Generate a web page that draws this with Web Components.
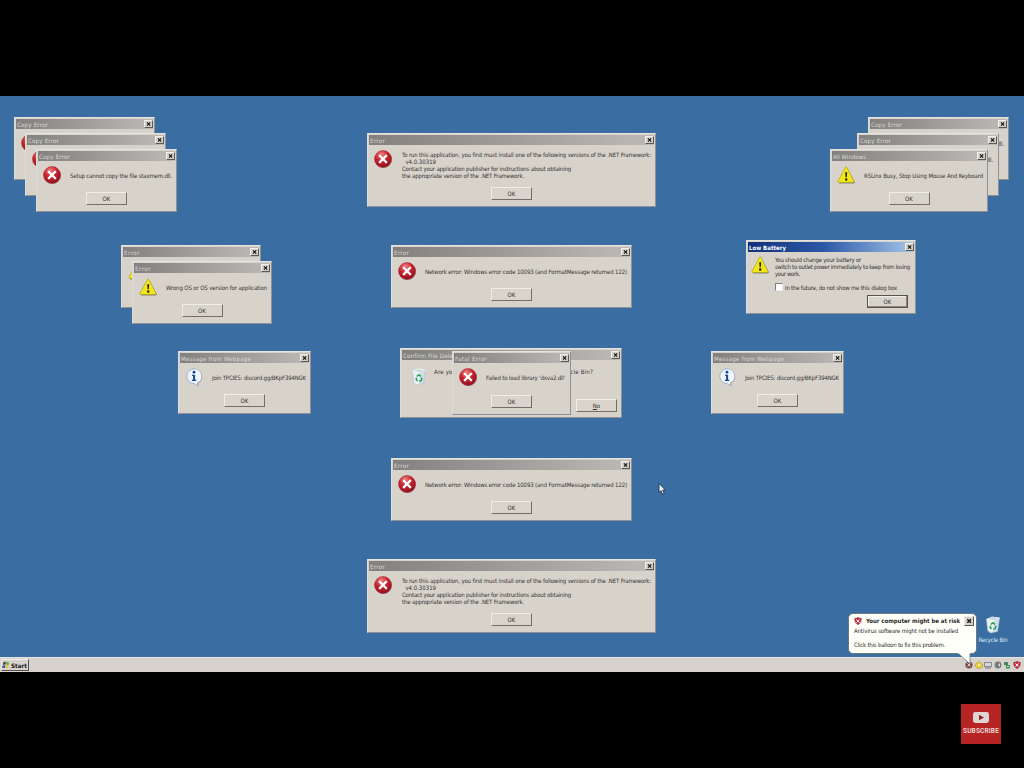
<!DOCTYPE html>
<html lang="en">
<head>
<meta charset="utf-8">
<title>Desktop</title>
<style>
  html, body { margin: 0; height: 100%; background: #000; overflow: hidden; }
  body { font-family: "DejaVu Sans Condensed", "DejaVu Sans", "Noto Sans", sans-serif; font-size: 6px; color: #33312f; }
</style>
</head>
<body>
<app-screen></app-screen>

<script>
// One line of text, spaced out to a given width in px
class FitLine extends HTMLElement {
  constructor () {
    super()
    this.attachShadow({ mode: 'open' })
    this.shadowRoot.innerHTML = `
      <style>
        :host { display: block; line-height: inherit; }
        span { display: block; width: max-content; white-space: pre; }
      </style>
      <span><slot></slot></span>
    `
  }

  connectedCallback () {
    const span = this.shadowRoot.querySelector('span')
    const width = Number(this.getAttribute('width'))
    const count = this.textContent.length
    if (!width || !count) return
    const natural = span.getBoundingClientRect().width
    span.style.letterSpacing = `${(width - natural) / count}px`
  }
}

const ICONS = {
  error: `
    <defs><radialGradient id="r" cx=".4" cy=".25" r=".8">
      <stop offset="0" stop-color="#ee8584"/><stop offset=".45" stop-color="#c92530"/><stop offset="1" stop-color="#8b0c19"/>
    </radialGradient></defs>
    <circle cx="9.6" cy="9.8" r="8.3" fill="#5b4c4a" opacity=".45"/>
    <circle cx="9" cy="9" r="8.5" fill="url(#r)" stroke="#9c2530" stroke-width=".5"/>
    <path d="M6 6l6 6M12 6l-6 6" stroke="#fff" stroke-width="2.3" stroke-linecap="square"/>`,
  warning: `
    <path d="M9.8 2L18 16.5L16.8 17.6H2z" fill="#55504a" opacity=".6"/>
    <path d="M8.6 1.2Q9.3.4 10 1.5L17 15.4Q17.2 16.5 16 16.5H1.6Q.5 16.3 1 15.2z" fill="#f3e51c" stroke="#a39b16" stroke-width=".6"/>
    <path d="M8.2 6.2h2l-.4 5.1H8.6z" fill="#24220c"/><circle cx="9.2" cy="13.5" r="1.2" fill="#24220c"/>`,
  info: `
    <path d="M9.8 1.8a7.7 7.2 0 0 1 3.4 13.4l.3 3-4-2.2A7.3 7.3 0 0 1 9.8 1.8z" fill="#6d7580" opacity=".7"/>
    <path d="M9 .8a8 7.5 0 0 1 3.3 14.2v2.6L9 15.7A8 7.5 0 0 1 9 .8z" fill="#f0f5fa" stroke="#93aac4" stroke-width=".7"/>
    <path d="M9 .8a8 7.5 0 0 0 0 14.9z" fill="#f0f5fa" stroke="#93aac4" stroke-width=".7"/>
    <path d="M8.4 1.4h1.4v13.7H8.4z" fill="#f0f5fa"/>
    <path d="M7.1 6.7h3v5h1.1v1.2H6.9v-1.2h1.2V7.9h-1z" fill="#17469c"/><circle cx="9" cy="4.2" r="1.4" fill="#17469c"/>`,
  bin: `
    <path d="M2.5 3.4L15.5 2l-2 13.4-7 1.6-2.8-2.4z" fill="#e7f1f2" stroke="#a9bcc2" stroke-width=".6"/>
    <path d="M2.5 3.4L8 1l7.5 1-5.3 2.5z" fill="#c2d6da" stroke="#fff" stroke-width=".7"/>
    <path d="M10.2 4.5L9 16.3l4.5-.9 2-13.4z" fill="#bdd1d9" opacity=".6"/>
    <path d="M6.8 8.5l2-1.8 2.2 1.6M11.8 9.7l-.5 3-2.2.4M7.5 13l-1.4-1.8.6-1.5" fill="none" stroke="#27a05b" stroke-width="1.5"/>`,
  shield: `
    <path d="M1.5 3Q6 3 9 .8Q12 3 16.5 3Q17.4 13 9 17.5Q.6 13 1.5 3z" fill="#c93144" stroke="#75303a"/>
    <path d="M5.6 5.7l6.8 6.8M12.4 5.7l-6.8 6.8" stroke="#fff" stroke-width="2.2"/>`
}

class UiIcon extends HTMLElement {
  constructor () {
    super()
    this.attachShadow({ mode: 'open' })
  }

  connectedCallback () {
    this.shadowRoot.innerHTML = `
      <style>
        :host { display: block; width: 18px; height: 18px; flex: none; }
        svg { display: block; width: 100%; height: 100%; overflow: visible; }
      </style>
      <svg viewBox="0 0 18 18">${ICONS[this.getAttribute('name')]}</svg>
    `
  }
}

class UiButton extends HTMLElement {
  constructor () {
    super()
    this.attachShadow({ mode: 'open' })
    this.shadowRoot.innerHTML = `
      <style>
        :host {
          display: flex; align-items: center; justify-content: center; box-sizing: border-box;
          width: 41px; height: 13px; flex: none; background: #d8d4cc; line-height: 8px;
          border: 1px solid; border-color: #efede8 #716e69 #716e69 #efede8;
        }
        :host([focused]) { outline: 1px solid #56544f; outline-offset: -1px; border-color: #65625d; box-shadow: inset -1px -1px #8b8882, inset 1px 1px #f1efea; }
      </style>
      <slot></slot>
    `
  }
}

class CloseButton extends HTMLElement {
  constructor () {
    super()
    this.attachShadow({ mode: 'open' })
    this.shadowRoot.innerHTML = `
      <style>
        :host {
          display: block; box-sizing: border-box; width: 9px; height: 8px; flex: none;
          background: #d5d1c9; border: 1px solid; border-color: #efeee9 #5a5854 #5a5854 #efeee9;
        }
        svg { display: block; width: 100%; height: 100%; }
      </style>
      <svg viewBox="0 0 7 6"><path d="M2 1.4l3.2 3.2M5.2 1.4L2 4.6" stroke="#1b1b1b" stroke-width="1.3"/></svg>
    `
  }
}

class DialogWindow extends HTMLElement {
  constructor () {
    super()
    this.attachShadow({ mode: 'open' })
  }

  static Styles = `
    :host {
      position: absolute; box-sizing: border-box; display: flex; flex-direction: column;
      background: #d7d3cb; padding: 1px 1px 2px;
      border: 1px solid; border-color: #e4e3de #8e9298 #8e9298 #dddcd8;
    }
    header {
      display: flex; align-items: center; justify-content: space-between; height: 10px; flex: none;
      background: linear-gradient(90deg, #828180, #bcbab6);
      color: #dcdad5; padding-left: 1px; line-height: 9px;
      box-sizing: border-box;
    }
    :host([active]) header {
      background: linear-gradient(90deg, #12317c, #2b58a6 45%, #a6c6ea); color: #fff; font-weight: 700;
    }
    main { display: flex; flex: 1; padding: 5px 0 0 5px; min-height: 0; }
    .text { line-height: 7px; padding: 5.5px 0 0 9px; }
    :host([wide]) .text { padding-left: 10px; padding-top: 1px; }
    :host([active]) .text { padding: 0 0 0 6px; }
    :host([active]) main { padding: 4px 0 0 3px; }
    :host([side]) .text { padding-left: 6px; padding-top: 0; }
    :host([side]) main { padding-left: 8px; padding-top: 8px; }
    footer { display: flex; justify-content: center; padding-bottom: 4px; flex: none; }
    :host([active]) footer, :host([side]) footer { justify-content: flex-end; padding-right: 6px; }
    :host([active]) footer { padding-bottom: 3px; }
    :host([side]) footer { padding-right: 3px; padding-bottom: 3px; }
  `

  connectedCallback () {
    const at = this.getAttribute('at').split(' ')
    const props = ['left', 'top', 'width', 'height']
    props.forEach((prop, i) => { this.style[prop] = `${at[i]}px` })

    this.shadowRoot.innerHTML = `
      <style>${DialogWindow.Styles}</style>
      <header>
        <fit-line width="${this.getAttribute('title-width')}">${this.getAttribute('caption')}</fit-line>
        <close-button></close-button>
      </header>
      <main>
        <ui-icon name="${this.getAttribute('icon')}"></ui-icon>
        <div class="text"><slot></slot></div>
      </main>
      <footer>
        <ui-button ${this.hasAttribute('active') ? 'focused' : ''}>${this.getAttribute('button') || 'OK'}</ui-button>
      </footer>
    `
  }
}

class SecurityBalloon extends HTMLElement {
  constructor () {
    super()
    this.attachShadow({ mode: 'open' })
    this.shadowRoot.innerHTML = `
      <style>
        :host {
          position: absolute; left: 848px; top: 517px; width: 129px; height: 41px; box-sizing: border-box;
          background: #fffffa; border: 1px solid #6c7880; border-radius: 5px; padding: 2px 2px 0 5px; color: #2b2b29;
        }
        .head { display: flex; align-items: center; height: 9px; font-weight: 700; }
        ui-icon { width: 8px; height: 8px; margin: 0 4px 0 0; }
        close-button { margin-left: auto; width: 10px; height: 10px; }
        p { margin: 0; line-height: 8px; padding-top: 2px; }
        p + p { padding-top: 6px; }
        .tail { position: absolute; left: 108px; top: 38px; width: 16px; height: 13px; }
      </style>
      <div class="head">
        <ui-icon name="shield"></ui-icon>
        <fit-line width="94">Your computer might be at risk</fit-line>
        <close-button></close-button>
      </div>
      <p><fit-line width="104">Antivirus software might not be installed</fit-line></p>
      <p><fit-line width="91">Click this balloon to fix this problem.</fit-line></p>
      <svg class="tail" viewBox="0 0 16 13"><path d="M1 1L13 12V1" fill="#fffffa" stroke="#6c7880" stroke-width=".8"/><path d="M.5 0h13v1.4H.5z" fill="#fffffa"/></svg>
    `
  }
}

class TaskBar extends HTMLElement {
  constructor () {
    super()
    this.attachShadow({ mode: 'open' })
    this.shadowRoot.innerHTML = `
      <style>
        :host {
          display: flex; align-items: center; justify-content: space-between; box-sizing: border-box;
          height: 15px; background: #d7d3cc; border-top: 1px solid #e6e4df; padding: 0 3px 0 1px;
        }
        .start {
          display: flex; align-items: center; gap: 1px; height: 12px; width: 28px; box-sizing: border-box;
          border: 1px solid; border-color: #f1efeb #55534f #55534f #f1efeb; font-weight: 700; color: #111; line-height: 9px;
        }
        .start svg { width: 8px; height: 8px; flex: none; }
        .tray { display: flex; gap: 1.6px; }
        .tray svg { width: 8px; height: 8px; display: block; }
      </style>
      <div class="start">
        <svg viewBox="0 0 9 9"><path d="M1.5 1.5l3-.7-.6 3-3 .5z" fill="#4b4a36"/><path d="M5 .8l3 .8-.7 2.8-3-.6z" fill="#6fac3a"/><path d="M.8 5l3-.6L3.2 8 0 8z" fill="#425b9d"/><path d="M4.3 4.5l3 .6-.6 3-3-.5z" fill="#e2c92b"/></svg>
        <fit-line width="16">Start</fit-line>
      </div>
      <div class="tray">
        <svg viewBox="0 0 8 8"><circle cx="4" cy="4" r="3.6" fill="#74504c"/><path d="M2.4 2.4l3.2 3.2M5.6 2.4L2.4 5.6" stroke="#e6c8c4"/></svg>
        <svg viewBox="0 0 8 8"><path d="M4 .5L7.5 3v3L4 7.8.5 6V3z" fill="#e8cf3b" stroke="#a48d28" stroke-width=".5"/><path d="M3 3h2v2H3z" fill="#f8f3b0"/></svg>
        <svg viewBox="0 0 8 8"><path d="M0 1h8v5H0z" fill="#8b8b95"/><path d="M1 2h6v3H1z" fill="#d6d6dc"/><path d="M1 7h6" stroke="#77757b"/></svg>
        <svg viewBox="0 0 8 8"><circle cx="4" cy="4" r="3.4" fill="#74797b"/><path d="M2 4h2l2-2v4L4 4" fill="#d5dadc"/></svg>
        <svg viewBox="0 0 8 8"><path d="M1 1h4v3H1z" fill="#4b8562"/><path d="M3 4h4v3.5H3z" fill="#3e9461"/><path d="M4 5h2v1H4z" fill="#c3e1c8"/></svg>
        <svg viewBox="0 0 18 18">${ICONS.shield}</svg>
      </div>
    `
  }
}

class SubscribeBadge extends HTMLElement {
  constructor () {
    super()
    this.attachShadow({ mode: 'open' })
    this.shadowRoot.innerHTML = `
      <style>
        :host {
          display: flex; flex-direction: column; align-items: center; box-sizing: border-box;
          width: 40px; height: 40px; background: #b72424; padding-top: 8px; gap: 4px;
          font: 700 6.5px/9px Roboto, sans-serif; color: #ead6d3;
        }
        svg { width: 16px; height: 11px; display: block; flex: none; }
      </style>
      <svg viewBox="0 0 16 11"><rect width="16" height="11" rx="2.4" fill="#dfd4d1"/><path d="M6 2.8l5 2.7-5 2.7z" fill="#8c2323"/></svg>
      <fit-line width="36">SUBSCRIBE</fit-line>
    `
  }
}

const copyError = (at) => `
  <dialog-window at="${at}" caption="Copy Error" title-width="31" icon="error">
    <fit-line width="102">Setup cannot copy the file staxmem.dll.</fit-line>
  </dialog-window>`

const netFramework = (top) => `
  <dialog-window at="367 ${top} 289 74" caption="Error" title-width="15" icon="error" wide>
    <fit-line width="249">To run this application, you first must install one of the following versions of the .NET Framework:</fit-line>
    <fit-line width="34">  v4.0.30319</fit-line>
    <fit-line width="169">Contact your application publisher for instructions about obtaining</fit-line>
    <fit-line width="122">the appropriate version of the .NET Framework.</fit-line>
  </dialog-window>`

const networkError = (top) => `
  <dialog-window at="391 ${top} 241 63" caption="Error" title-width="15" icon="error">
    <fit-line width="202">Network error: Windows error code 10093 (and FormatMessage returned 122)</fit-line>
  </dialog-window>`

const wrongOs = (at) => `
  <dialog-window at="${at}" caption="Error" title-width="16" icon="warning">
    <fit-line width="101">Wrong OS or OS version for application</fit-line>
  </dialog-window>`

const webMessage = (left) => `
  <dialog-window at="${left} 255 133 63" caption="Message from Webpage" title-width="70" icon="info">
    <fit-line width="94">Join TPCIES: discord.gg/BKpF394NGK</fit-line>
  </dialog-window>`

class AppScreen extends HTMLElement {
  constructor () {
    super()
    this.attachShadow({ mode: 'open' })
  }

  connectedCallback () {
    this.shadowRoot.innerHTML = `
      <style>
        :host { display: flex; flex-direction: column; width: 1024px; height: 768px; padding-top: 96px; box-sizing: border-box; }
        .desktop { position: relative; height: 561px; flex: none; background: #3a6ea3; }
        .bin { position: absolute; left: 978px; top: 520px; width: 30px; display: flex; flex-direction: column; align-items: center; gap: 2px; color: #dce8f2; line-height: 8px; }
        .pointer { position: absolute; left: 658px; top: 387px; width: 8px; height: 12px; }
        .below { display: flex; justify-content: flex-end; padding: 32px 23px 0 0; }
      </style>
      <div class="desktop">
        ${copyError('14 21 141 63')}
        ${copyError('25 37 141 63')}
        ${copyError('36 53 141 63')}
        ${netFramework(37)}
        ${copyError('868 21 141 63')}
        ${copyError('857 37 142 63')}
        <dialog-window at="830 53 158 63" caption="All Windows" title-width="33" icon="warning">
          <fit-line width="119">RSLinx Busy, Stop Using Mouse And Keyboard</fit-line>
        </dialog-window>
        ${wrongOs('121 149 140 63')}
        ${wrongOs('132 165 140 63')}
        ${networkError(149)}
        <dialog-window at="746 144 170 74" caption="Low Battery" title-width="37" icon="warning" active>
          <fit-line width="86">You should change your battery or</fit-line>
          <fit-line width="135">switch to outlet power immediately to keep from losing</fit-line>
          <fit-line width="25">your work.</fit-line>
          <check-line><fit-line width="112">In the future, do not show me this dialog box</fit-line></check-line>
        </dialog-window>
        ${webMessage(178)}
        <dialog-window at="400 252 222 70" caption="Confirm File Delete" title-width="56" icon="bin" button="&lt;u&gt;N&lt;/u&gt;o" side>
          <fit-line width="159">Are you sure you want to send this to the Recycle Bin?</fit-line>
        </dialog-window>
        <dialog-window at="452 255 119 64" caption="Fatal Error" title-width="32" icon="error">
          <fit-line width="79">Failed to load library 'dxva2.dll'</fit-line>
        </dialog-window>
        ${webMessage(711)}
        ${networkError(362)}
        ${netFramework(463)}
        <div class="bin"><ui-icon name="bin"></ui-icon><fit-line width="29">Recycle Bin</fit-line></div>
        <security-balloon></security-balloon>
        <svg class="pointer" viewBox="0 0 8 12"><path d="M1 .5v9l2-1.8 1.6 3.6 1.6-.8L4.7 7.1h2.7z" fill="#f2f6fa" stroke="#15253a" stroke-width=".8"/></svg>
      </div>
      <task-bar></task-bar>
      <div class="below"><subscribe-badge></subscribe-badge></div>
    `
  }
}

// Checkbox with its label
class CheckLine extends HTMLElement {
  constructor () {
    super()
    this.attachShadow({ mode: 'open' })
    this.shadowRoot.innerHTML = `
      <style>
        :host { display: flex; align-items: center; gap: 2px; margin-top: 6px; }
        i { width: 6px; height: 6px; background: #fff; border: 1px solid; border-color: #817e79 #eeece8 #eeece8 #817e79; }
      </style>
      <i></i><slot></slot>
    `
  }
}

customElements.define('fit-line', FitLine)
customElements.define('ui-icon', UiIcon)
customElements.define('ui-button', UiButton)
customElements.define('close-button', CloseButton)
customElements.define('check-line', CheckLine)
customElements.define('dialog-window', DialogWindow)
customElements.define('security-balloon', SecurityBalloon)
customElements.define('task-bar', TaskBar)
customElements.define('subscribe-badge', SubscribeBadge)
customElements.define('app-screen', AppScreen)
</script>
</body>
</html>
